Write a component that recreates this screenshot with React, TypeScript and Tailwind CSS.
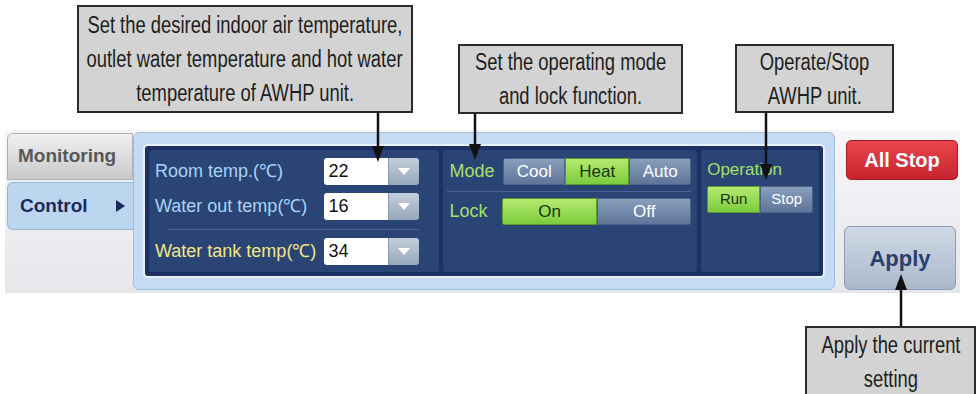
import React from "react";

const callout =
  "absolute bg-[#d3d3d3] border-2 border-[#2a2a2a] text-[#1e1e1e] flex flex-col items-center justify-center text-[23px] leading-[34px] font-['Liberation_Sans',Arial,sans-serif]";

function Line({ children }: { children: React.ReactNode }) {
  return <span className="block whitespace-nowrap scale-x-[0.8]">{children}</span>;
}

function Dropdown({ value }: { value: string }) {
  return (
    <div className="flex h-[27px] rounded-[3px] overflow-hidden">
      <div className="w-[64px] bg-white text-[#111] text-[18px] leading-[27px] pl-[5px]">
        {value}
      </div>
      <div className="w-[31px] bg-gradient-to-b from-[#c3ceda] to-[#97a8bc] border-l border-[#8797ab] flex items-center justify-center">
        <svg width="12" height="7" viewBox="0 0 12 7">
          <polygon points="0,0 12,0 6,7" fill="#fff" />
        </svg>
      </div>
    </div>
  );
}

function Seg({
  label,
  on,
  w,
  text = "text-[17px]",
}: {
  label: string;
  on?: boolean;
  w: string;
  text?: string;
}) {
  return (
    <div
      className={`${w} h-[27px] ${text} flex items-center justify-center border ${
        on
          ? "bg-gradient-to-b from-[#b4ea6e] to-[#7ccb3c] border-[#5a9c28] text-[#17330c]"
          : "bg-gradient-to-b from-[#8a9fbe] to-[#5f7598] border-[#4c6288] text-white"
      }`}
    >
      {label}
    </div>
  );
}

export default function App() {
  return (
    <div className="relative w-[980px] h-[394px] bg-white overflow-hidden font-['Liberation_Sans',Arial,sans-serif]">
      {/* Control screen */}
      <div className="pt-[130px] pl-[5px]">
        <div className="flex w-[955px] h-[163px] bg-gradient-to-b from-[#f6f5f8] to-[#e7e7eb]">
          {/* tabs */}
          <div className="w-[128px] pt-[3px] pl-[2px] flex flex-col gap-[2px]">
            <div className="h-[47px] rounded-tl-[6px] bg-gradient-to-b from-[#f1f1f1] to-[#c9c9c9] border border-[#b0b0b0] text-[#585858] text-[19px] font-bold flex items-center pl-[10px]">
              Monitoring
            </div>
            <div className="h-[48px] -mr-[4px] rounded-l-[6px] bg-[#bcd6f0] border border-r-0 border-[#95b7dc] text-[#1b2a5a] text-[19px] font-bold flex items-center pl-[12px] pr-[12px] justify-between">
              <span>Control</span>
              <svg width="9" height="12" viewBox="0 0 9 12">
                <polygon points="0,0 9,6 0,12" fill="#1b2a5a" />
              </svg>
            </div>
          </div>

          {/* main panel */}
          <div className="mt-[2px] w-[702px] h-[158px] rounded-[6px] bg-[#c4dbf2] border border-[#9dbde0] p-[9px] pt-[11px]">
            <div className="h-[134px] rounded-[5px] bg-[#1d3163] border-2 border-[#e8f1fb] p-[4px] flex gap-[4px]">
              {/* temps */}
              <div className="w-[290px] rounded-[3px] bg-[#2b4476] pl-[6px] pr-[20px] pt-[8px] flex flex-col">
                <div className="flex items-center justify-between">
                  <span className="text-[18px] text-[#a8d5f5]">Room temp.(℃)</span>
                  <Dropdown value="22" />
                </div>
                <div className="flex items-center justify-between mt-[8px]">
                  <span className="text-[18px] text-[#a8d5f5]">Water out temp(℃)</span>
                  <Dropdown value="16" />
                </div>
                <div className="h-px bg-[#4a6294] mt-[9px] ml-[13px]" />
                <div className="flex items-center justify-between mt-[8px]">
                  <span className="text-[18px] text-[#f2e784]">Water tank temp(℃)</span>
                  <Dropdown value="34" />
                </div>
              </div>

              {/* mode / lock */}
              <div className="w-[255px] rounded-[3px] bg-[#2b4476] pl-[7px] pr-[6px] pt-[8px] flex flex-col">
                <div className="flex items-center justify-between">
                  <span className="text-[18px] text-[#a5e06a]">Mode</span>
                  <div className="flex rounded-[3px] overflow-hidden">
                    <Seg label="Cool" w="w-[62px]" />
                    <Seg label="Heat" on w="w-[64px]" />
                    <Seg label="Auto" w="w-[62px]" />
                  </div>
                </div>
                <div className="h-px bg-[#4a6294] mt-[6px] -ml-[3px]" />
                <div className="flex items-center justify-between mt-[6px]">
                  <span className="text-[18px] text-[#a5e06a]">Lock</span>
                  <div className="flex rounded-[3px] overflow-hidden">
                    <Seg label="On" on w="w-[95px]" />
                    <Seg label="Off" w="w-[94px]" />
                  </div>
                </div>
              </div>

              {/* operation */}
              <div className="w-[118px] rounded-[3px] bg-[#2b4476] pl-[6px] pt-[9px] flex flex-col">
                <span className="text-[17px] text-[#a5e06a] leading-[22px]">Operation</span>
                <div className="flex rounded-[3px] overflow-hidden mt-[5px] w-fit">
                  <Seg label="Run" on w="w-[53px]" text="text-[15px]" />
                  <Seg label="Stop" w="w-[53px]" text="text-[15px]" />
                </div>
              </div>
            </div>
          </div>

          {/* right buttons */}
          <div className="ml-[9px] pt-[10px] flex flex-col">
            <div className="ml-[2px] w-[112px] h-[40px] rounded-[5px] bg-gradient-to-b from-[#e8454f] to-[#c9222e] border border-[#a51c26] text-white text-[20px] font-bold flex items-center justify-center">
              All Stop
            </div>
            <div className="mt-[46px] w-[112px] h-[64px] rounded-[6px] bg-gradient-to-b from-[#cfd9e5] to-[#aab9cb] border border-[#8b9bb1] text-[#2b3f6c] text-[22px] font-bold flex items-center justify-center">
              Apply
            </div>
          </div>
        </div>
      </div>

      {/* callouts */}
      <div className={`${callout} left-[77px] top-[5px] w-[336px] h-[108px]`}>
        <Line>Set the desired indoor air temperature,</Line>
        <Line>outlet water temperature and hot water</Line>
        <Line>temperature of AWHP unit.</Line>
      </div>
      <div className={`${callout} left-[458px] top-[44px] w-[225px] h-[70px]`}>
        <Line>Set the operating mode</Line>
        <Line>and lock function.</Line>
      </div>
      <div className={`${callout} left-[735px] top-[44px] w-[159px] h-[69px]`}>
        <Line>Operate/Stop</Line>
        <Line>AWHP unit.</Line>
      </div>
      <div className={`${callout} left-[805px] top-[326px] w-[171px] h-[70px] justify-start leading-[33px]`}>
        <Line>Apply the current</Line>
        <Line>setting</Line>
      </div>

      {/* arrows */}
      <svg className="absolute inset-0 pointer-events-none" width="980" height="394">
        <g stroke="#111" strokeWidth="2.5">
          <line x1="378" y1="112" x2="378" y2="150" />
          <line x1="475" y1="113" x2="475" y2="148" />
          <line x1="766" y1="112" x2="766" y2="168" />
          <line x1="901" y1="326" x2="901" y2="285" />
        </g>
        <g fill="#111">
          <polygon points="372,146 384,146 378,162" />
          <polygon points="469,144 481,144 475,160" />
          <polygon points="760,164 772,164 766,180" />
          <polygon points="895,290 907,290 901,274" />
        </g>
      </svg>
    </div>
  );
}
